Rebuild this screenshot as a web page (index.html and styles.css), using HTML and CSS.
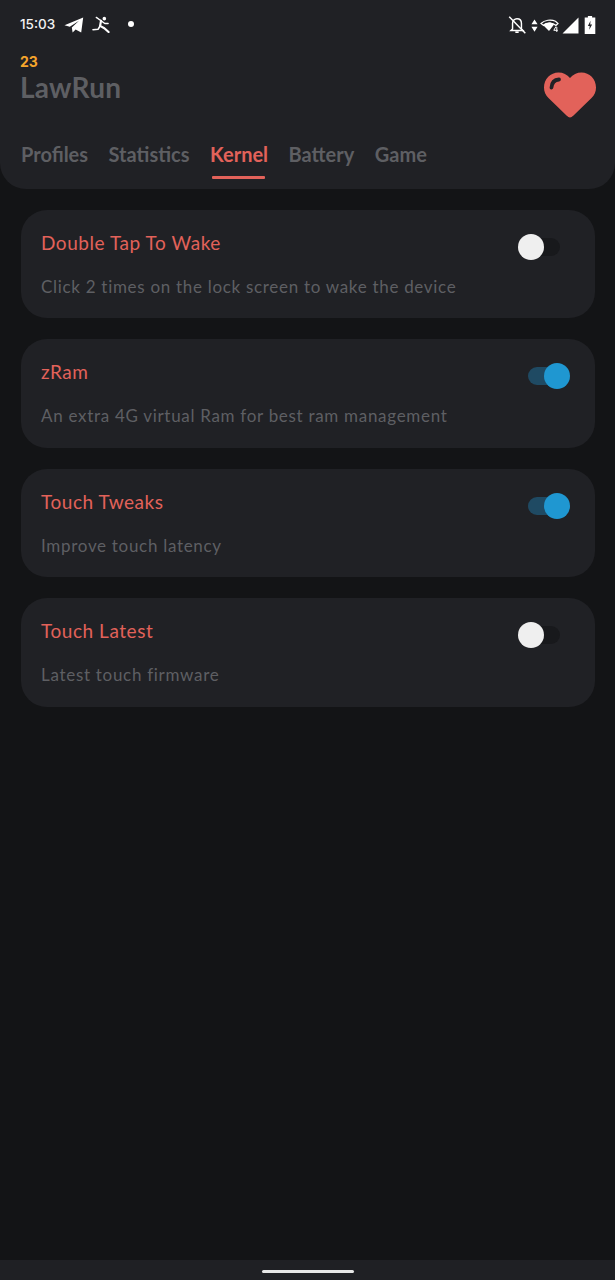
FILE: index.html
```
<!DOCTYPE html>
<html lang="en">
<head>
<meta charset="utf-8">
<title>LawRun</title>
<link rel="stylesheet" href="styles.css">
</head>
<body>
<div class="screen">
  <header class="header">
    <div class="status">
      <div class="status-left">
        <span class="time">15:03</span>
        <svg class="ic-telegram" viewBox="0 0 20 16"><path d="M0.5 8.200 19.200 0.600 17.200 15.600 11.600 12.600 8.600 15.600 7.800 10.600 15 3.800 5.800 9.800Z" fill="#fff"/></svg>
        <svg class="ic-runner" viewBox="0 0 20 18"><g fill="none" stroke="#fff" stroke-linecap="round" stroke-linejoin="round"><path d="M9.500 5 8.500 10.500 13 13 17.500 17" stroke-width="2.300"/><path d="M8.500 10.500 6.500 14 1 14.500" stroke-width="1.700"/><path d="M9.500 5 4.500 1.500M9.500 5 13.500 8 17 8" stroke-width="1.500"/></g><circle cx="13" cy="2.800" r="1.900" fill="#fff"/></svg>
        <span class="dot"></span>
      </div>
      <div class="status-right">
        <svg class="ic-bell" viewBox="0 0 18 18"><path d="M5 12.500V7.500C5 5 6.700 3.300 9 3.300S13 5 13 7.500V12.500L14.500 14H3.500Z M7.500 15.500H10.500" fill="none" stroke="#fff" stroke-width="1.300"/><path d="M2 1.500 16.500 16.500" stroke="#fff" stroke-width="1.300"/></svg>
        <svg class="ic-arrows" viewBox="0 0 8 16"><path d="M4 1 7.500 6.500H.5ZM4 15 .5 9.500H7.500Z" fill="#fff"/></svg>
        <svg class="ic-wifi" viewBox="0 0 20 15"><path d="M1 5.500C4.500 2 11 1 15.500 3.300L18 5.500 16 7.500C12.500 4 6.500 4.500 3.500 7.500Z" fill="none" stroke="#fff" stroke-width="1.200"/><path d="M3 7 C6.500 3.800 11.500 4 14 6.500L9 13Z" fill="#fff"/><path d="M16 8.500 13.800 12.300H17.800M16.800 9V14" fill="none" stroke="#fff" stroke-width="1"/></svg>
        <svg class="ic-signal" viewBox="0 0 16 16"><path d="M15.500 .5V15.500H.5Z" fill="#fff"/></svg>
        <svg class="ic-battery" viewBox="0 0 11 17"><path d="M3.500 0H7.500V1.500H10.500V17H.5V1.500H3.500Z" fill="#fff"/><path d="M6 4.500 3.500 9.500H5.200L4.800 13 7.500 8H5.700Z" fill="#212226"/></svg>
      </div>
    </div>
    <div class="title-row">
      <div class="titles">
        <div class="count">23</div>
        <h1 class="title">LawRun</h1>
      </div>
      <svg class="heart" viewBox="0 0 52 46"><path d="M26 45.500C24.800 45.500 24 44.800 22.500 43.500L4.500 26C1.500 23 0 19.500 0 15.500 0 7 6.500 .5 14.500 .5 19 .5 23.200 2.500 26 6 28.800 2.500 33 .5 37.500 .5 45.500 .5 52 7 52 15.500 52 19.500 50.500 23 47.500 26L29.500 43.500C28 44.800 27.200 45.500 26 45.500Z" fill="#e2625a"/><path d="M7.500 15.500C7.800 10.500 10.500 7.800 15 7.500" fill="none" stroke="#212226" stroke-width="3.800" stroke-linecap="round"/></svg>
    </div>
    <nav class="tabs">
      <span class="tab">Profiles</span>
      <span class="tab">Statistics</span>
      <span class="tab tab-active">Kernel</span>
      <span class="tab">Battery</span>
      <span class="tab">Game</span>
    </nav>
  </header>

  <main class="list">
    <section class="card">
      <div class="card-top"><h2 class="card-title">Double Tap To Wake</h2><span class="switch"><span class="knob"></span></span></div>
      <p class="card-desc">Click 2 times on the lock screen to wake the device</p>
    </section>
    <section class="card">
      <div class="card-top"><h2 class="card-title">zRam</h2><span class="switch switch-on"><span class="knob"></span></span></div>
      <p class="card-desc">An extra 4G virtual Ram for best ram management</p>
    </section>
    <section class="card">
      <div class="card-top"><h2 class="card-title">Touch Tweaks</h2><span class="switch switch-on"><span class="knob"></span></span></div>
      <p class="card-desc">Improve touch latency</p>
    </section>
    <section class="card">
      <div class="card-top"><h2 class="card-title">Touch Latest</h2><span class="switch"><span class="knob"></span></span></div>
      <p class="card-desc">Latest touch firmware</p>
    </section>
  </main>

  <footer class="navbar"><span class="handle"></span></footer>
</div>
</body>
</html>
```
FILE: styles.css
```
* { box-sizing: border-box; }
html, body { margin: 0; padding: 0; }
body { background: #131416; font-family: "Lato", "Noto Sans", sans-serif; }
.screen { width: 615px; height: 1280px; display: flex; flex-direction: column; overflow: hidden; background: #131416; }

.header { height: 189px; background: #202125; border-radius: 0 0 26px 26px; padding: 0 19px 0 21px; display: flex; flex-direction: column; }
.status { height: 48px; display: flex; justify-content: space-between; align-items: center; }
.status-left { display: flex; align-items: center; margin-left: -1px; }
.time { font-family: "Inter", sans-serif; font-size: 13.5px; font-weight: 500; color: #f2f2f2; width: 44px; }
.ic-telegram { width: 20px; height: 16px; margin-right: 8px; margin-top: 1px; }
.ic-runner { width: 19px; height: 17px; }
.dot { width: 6px; height: 6px; border-radius: 50%; background: #fff; margin-left: 17px; }
.status-right { display: flex; align-items: center; margin-top: 2px; }
.ic-bell { width: 20px; height: 20px; margin-right: 4px; }
.ic-arrows { width: 7px; height: 15px; margin-right: 2px; }
.ic-wifi { width: 20px; height: 15px; margin-right: 2px; }
.ic-signal { width: 17px; height: 17px; margin-right: 5px; }
.ic-battery { width: 12px; height: 18px; }

.title-row { height: 60px; display: flex; justify-content: space-between; align-items: flex-start; }
.titles { display: flex; flex-direction: column; }
.count { font-family: "Inter", sans-serif; font-size: 14px; font-weight: 700; color: #f5a52c; line-height: 16px; margin: 6px 0 0 -1px; }
.title { margin: 0 0 0 -1px; font-size: 28px; font-weight: 700; color: #5e5f63; line-height: 34px; letter-spacing: 0.2px; }
.heart { width: 52px; height: 46px; margin-top: 24px; }

.tabs { display: flex; gap: 20.500px; margin-top: 28px; }
.tab { font-size: 20px; font-weight: 700; color: #5e5f63; line-height: 36px; height: 52px; position: relative; }
.tab-active { color: #e2625a; }
.tab-active::after { content: ""; position: absolute; left: 2px; right: 3px; top: 40px; height: 3px; background: #e2625a; border-radius: 1px; }

.list { flex: 1; padding: 21px 20px 0 21px; display: flex; flex-direction: column; gap: 21px; }
.card { height: 108.400px; background: #202125; border-radius: 26px; padding: 20px 35px 0 20px; }
.card-top { display: flex; justify-content: space-between; align-items: flex-start; height: 45px; }
.card-title { margin: 0; font-size: 19px; font-weight: 400; color: #e2625a; line-height: 26px; letter-spacing: 0.55px; }
.card-desc { margin: 0; font-size: 17px; font-weight: 400; color: #5e5f63; line-height: 24px; letter-spacing: 0.7px; }

.switch { display: block; width: 32px; height: 18px; border-radius: 9px; position: relative; margin-top: 8px; background: #18191c; }
.switch .knob { position: absolute; left: -10px; top: -4px; width: 26px; height: 26px; border-radius: 50%; background: #efefef; }
.switch-on { background: #1f4a63; }
.switch-on .knob { left: 16px; background: #1f97d1; }

.navbar { height: 20px; background: #1f2024; display: flex; justify-content: center; padding-top: 10px; }
.handle { width: 92px; height: 3px; background: #e6e6e6; border-radius: 2px; margin-left: 1px; }
```
